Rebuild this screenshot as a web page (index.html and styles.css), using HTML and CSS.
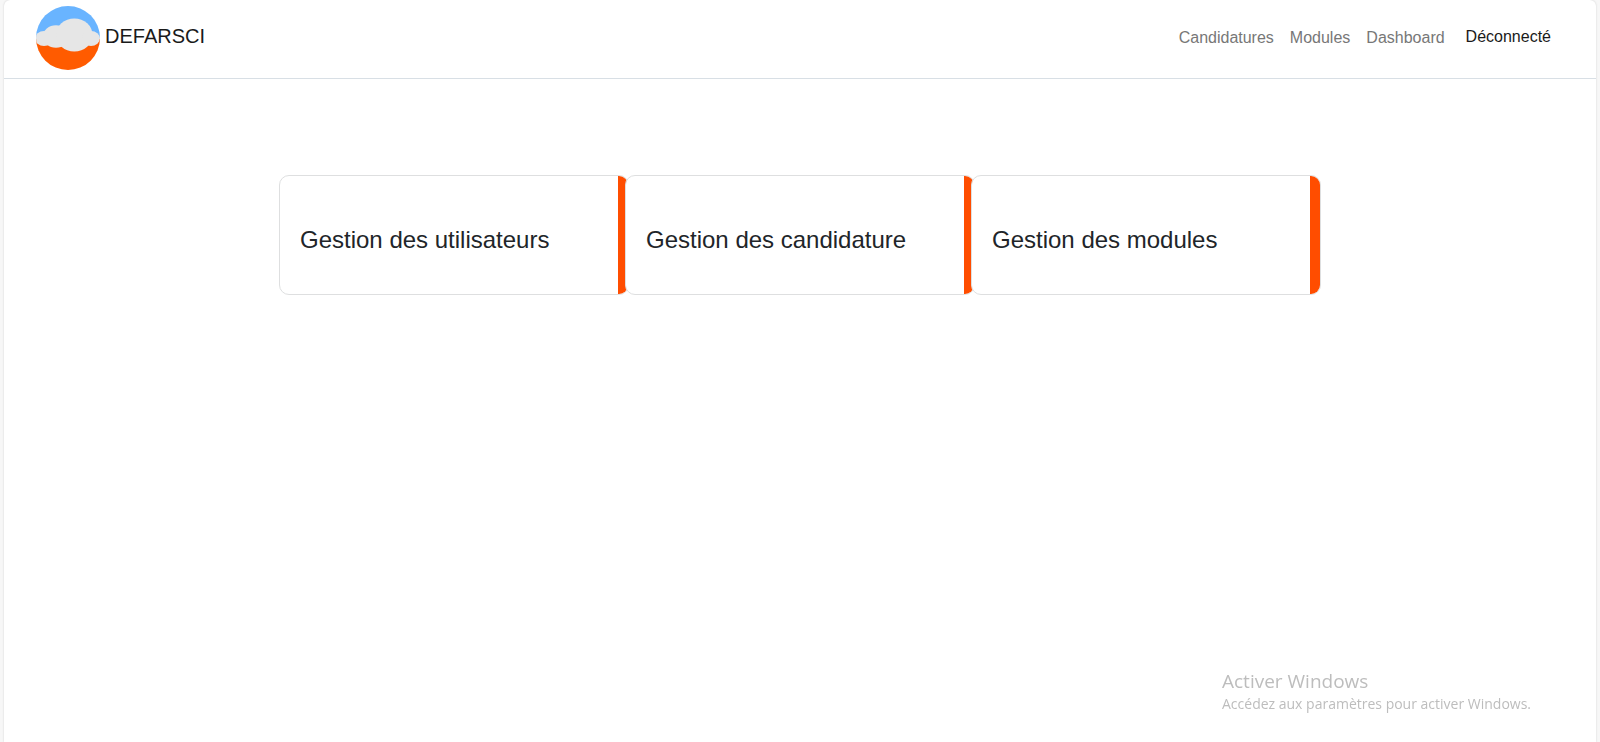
FILE: index.html
```html
<!DOCTYPE html>
<html lang="fr">
<head>
<meta charset="utf-8">
<meta name="viewport" content="width=device-width, initial-scale=1">
<title>DEFARSCI</title>
<link rel="stylesheet" href="styles.css">
</head>
<body>
<div class="page">
  <header class="navbar">
    <a class="brand" href="#">
      <svg class="logo" viewBox="0 0 64 64" aria-hidden="true">
        <clipPath id="disc"><circle cx="32" cy="32" r="32"/></clipPath>
        <g clip-path="url(#disc)">
          <rect width="64" height="33" fill="#69b4ff"/>
          <rect y="33" width="64" height="31" fill="#ff5b00"/>
          <g fill="#e6e6e6">
            <ellipse cx="8" cy="32.5" rx="9" ry="7.5"/>
            <ellipse cx="20" cy="30.5" rx="13" ry="11.3"/>
            <ellipse cx="38.3" cy="29" rx="18.3" ry="16.5"/>
            <ellipse cx="55" cy="32.5" rx="9" ry="7.5"/>
          </g>
        </g>
      </svg>
      <span>DEFARSCI</span>
    </a>
    <nav class="menu">
      <a class="link" href="#">Candidatures</a>
      <a class="link" href="#">Modules</a>
      <a class="link" href="#">Dashboard</a>
      <button class="logout" type="button">Déconnecté</button>
    </nav>
  </header>
  <main class="cards">
    <a class="card" href="#"><h2 class="title">Gestion des utilisateurs</h2></a>
    <a class="card" href="#"><h2 class="title">Gestion des candidature</h2></a>
    <a class="card" href="#"><h2 class="title">Gestion des modules</h2></a>
  </main>
</div>
<aside class="notice">
  <p class="notice-title">Activer Windows</p>
  <p class="notice-text">Accédez aux paramètres pour activer Windows.</p>
</aside>
</body>
</html>
```
FILE: styles.css
```css
* {
  box-sizing: border-box;
}

body {
  margin: 0;
  padding: 0 4px;
  background: #f7f7f7;
  color: #212529;
  font-family: "Liberation Sans", Arial, sans-serif;
  font-size: 16px;
  line-height: 24px;
}

.page {
  min-height: 100vh;
  background: #fff;
  border-radius: 6px 6px 0 0;
  box-shadow: 0 0 2px #ccc;
}

.navbar {
  display: flex;
  align-items: center;
  justify-content: space-between;
  padding: 6px 45px 8px 32px;
  border-bottom: 1px solid #d8dfe5;
}

.brand {
  display: flex;
  align-items: center;
  gap: 5px;
  color: #1a1a1a;
  font-size: 20px;
  line-height: 30px;
  text-decoration: none;
}

.brand span {
  padding-bottom: 4px;
}

.logo {
  width: 64px;
  height: 64px;
}

.menu {
  display: flex;
  align-items: center;
  gap: 16px;
}

.link {
  color: #777;
  text-decoration: none;
}

.logout {
  margin: 0 0 2px 5px;
  padding: 0;
  border: 0;
  background: none;
  color: #1a1a1a;
  font: inherit;
  cursor: pointer;
}

.cards {
  display: flex;
  justify-content: center;
  padding: 96px 24px 24px;
}

.card {
  position: relative;
  flex: 0 1 350px;
  padding: 49px 20px 39px;
  overflow: hidden;
  border: 1px solid #dedfe0;
  border-radius: 10px;
  background: #fff;
  color: inherit;
  text-decoration: none;
}

.card + .card {
  margin-left: -4px;
}

.card::after {
  content: "";
  position: absolute;
  inset: 0 0 0 auto;
  width: 10px;
  background: #ff4d00;
}

.title {
  margin: 0;
  font-size: 24px;
  font-weight: 400;
  line-height: 30px;
}

.notice {
  position: fixed;
  right: 66px;
  bottom: 28px;
  min-width: 312px;
  color: #bdbdbd;
  font-family: "Open Sans", "Noto Sans", sans-serif;
}

.notice p {
  margin: 0;
}

.notice-title {
  font-size: 19px;
  line-height: 26px;
}

.notice-text {
  font-size: 14px;
  line-height: 20px;
}
```
